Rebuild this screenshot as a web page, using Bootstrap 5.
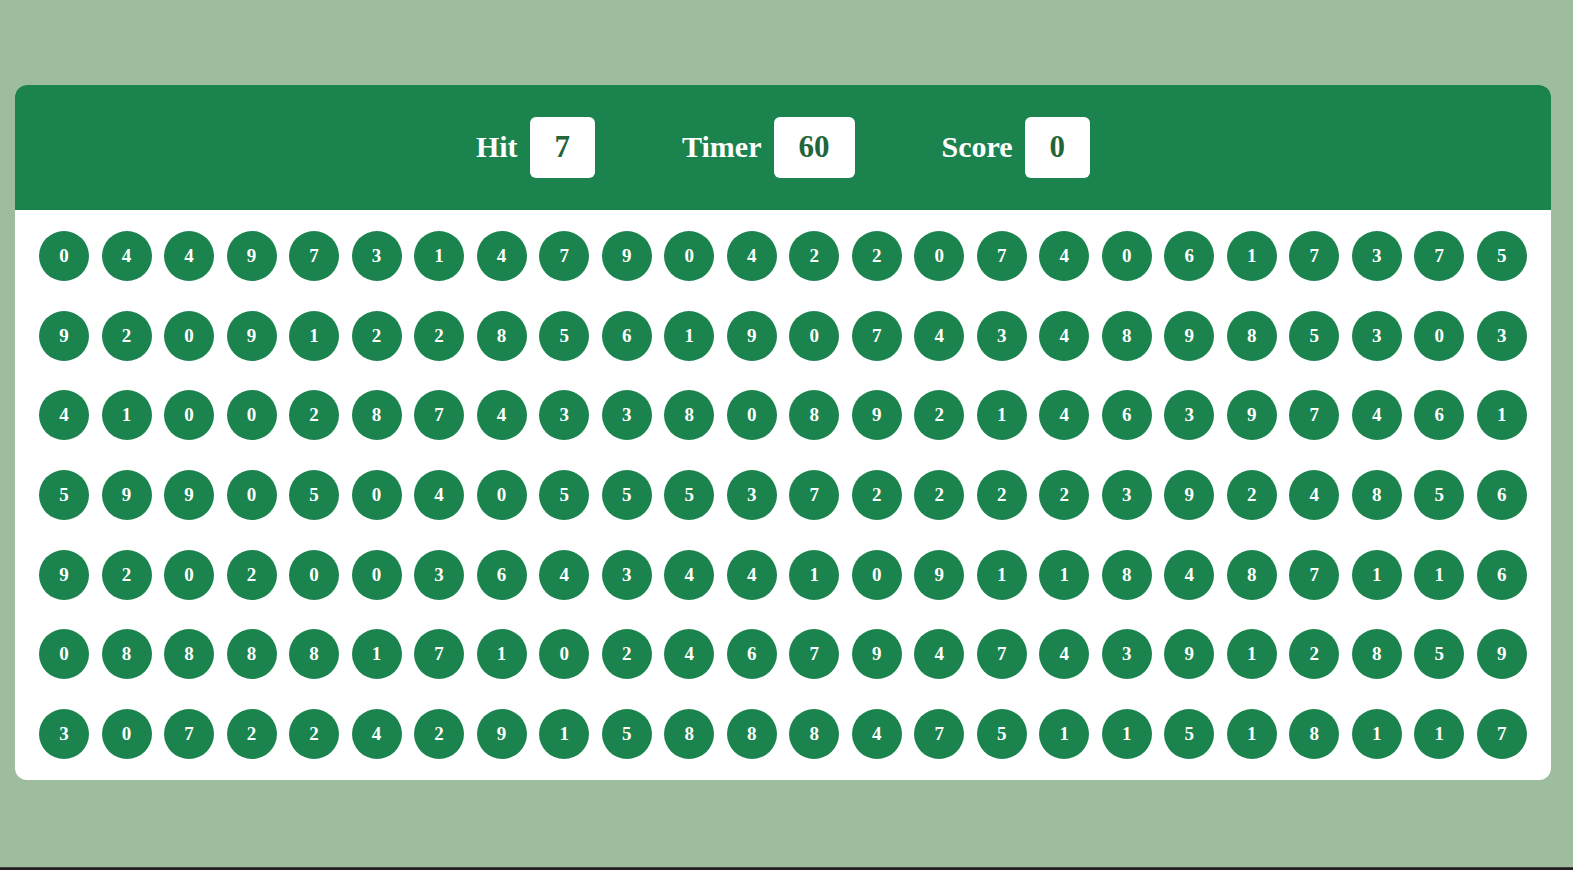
<!DOCTYPE html>
<html lang="en">
<head>
<meta charset="utf-8">
<meta name="viewport" content="width=device-width, initial-scale=1">
<title>Bubble Game</title>
<link href="https://cdn.jsdelivr.net/npm/bootstrap@5.3.0/dist/css/bootstrap.min.css" rel="stylesheet">
<style>
  :root { --game-green: #1b834d; --game-sage: #9ebc9e; }
  body { font-family: "Liberation Serif", "Times New Roman", serif; background: var(--game-sage); }
  .stage { padding: 85px 22px 85px 15px; }
  .game { border-radius: 12px; }
  .panel { background: var(--game-green); padding: 32px 24px; gap: 16px 87px; }
  .stat { font-size: 30px; line-height: 36px; gap: 12px; }
  .stat label { padding-bottom: 2px; }
  .stat output { font-size: 31px; line-height: 37px; padding: 11px 25px 13px; border-radius: 6px; color: #23653a; }
  .bubbles {
    display: grid;
    grid-template-columns: repeat(auto-fill, 50px);
    grid-auto-rows: 50px;
    gap: 29px 12px;
    justify-content: space-between;
    align-content: space-between;
    min-height: 570px;
    padding: 21px 24px;
  }
  .bubble { background: var(--game-green); font-size: 19px; line-height: 22px; }
  .bubble:hover { background: #14663b; }
  .base-bar { height: 3px; background: #231f20; border-top: 1px solid #3d453e; }
</style>
</head>
<body class="d-flex flex-column min-vh-100">
<main class="stage flex-grow-1">
  <div class="game bg-white overflow-hidden">
    <header class="panel d-flex flex-wrap justify-content-center align-items-center text-white fw-bold">
      <div class="stat d-flex align-items-center"><label for="hit">Hit</label><output id="hit" class="bg-white">7</output></div>
      <div class="stat d-flex align-items-center"><label for="timer">Timer</label><output id="timer" class="bg-white">60</output></div>
      <div class="stat d-flex align-items-center"><label for="score">Score</label><output id="score" class="bg-white">0</output></div>
    </header>
    <section class="bubbles" id="bubbles" aria-label="Bubbles"></section>
  </div>
</main>
<footer class="base-bar"></footer>
<script src="https://cdn.jsdelivr.net/npm/bootstrap@5.3.0/dist/js/bootstrap.bundle.min.js"></script>
<script>
  const rows = [
    "044973147904220740617375",
    "920912285619074348985303",
    "410028743380892146397461",
    "599050405553722223924856",
    "920200364344109118487116",
    "088881710246794743912859",
    "307224291588847511518117"
  ];
  const board = document.getElementById("bubbles");
  for (const digit of rows.join("")) {
    const bubble = document.createElement("button");
    bubble.type = "button";
    bubble.className = "bubble rounded-circle border-0 p-0 text-white fw-bold";
    bubble.textContent = digit;
    board.append(bubble);
  }
</script>
</body>
</html>
